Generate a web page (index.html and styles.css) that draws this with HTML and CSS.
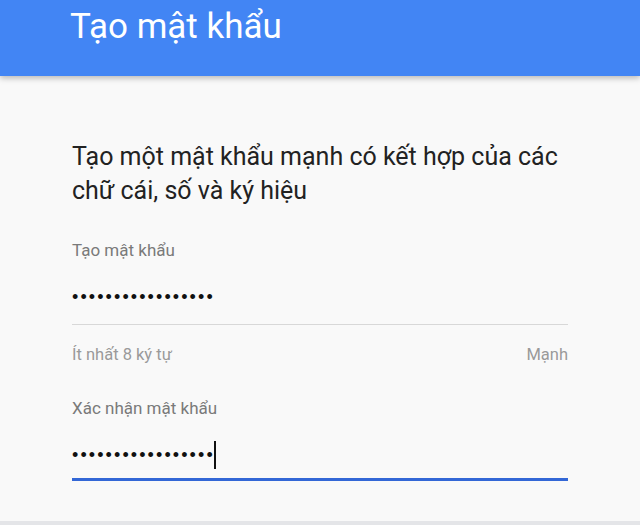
FILE: index.html
```html
<!DOCTYPE html>
<html lang="vi">
<head>
<meta charset="utf-8">
<link rel="stylesheet" href="styles.css">
</head>
<body>
<div class="page">
  <header class="appbar">
    <h1 class="title">Tạo mật khẩu</h1>
  </header>
  <main class="content">
    <p class="intro">Tạo một mật khẩu mạnh có kết hợp của các chữ cái, số và ký hiệu</p>
    <div class="field">
      <div class="label">Tạo mật khẩu</div>
      <div class="value">•••••••••••••••••</div>
      <div class="line"></div>
      <div class="helper"><span>Ít nhất 8 ký tự</span><span>Mạnh</span></div>
    </div>
    <div class="field field-2">
      <div class="label">Xác nhận mật khẩu</div>
      <div class="value value-2"><span>•••••••••••••••••</span><span class="cursor"></span></div>
      <div class="line line-active"></div>
    </div>
  </main>
  <div class="bottom"></div>
</div>
</body>
</html>
```
FILE: styles.css
```css
* { box-sizing: border-box; }
html, body { margin: 0; padding: 0; }
body {
  width: 640px;
  height: 525px;
  overflow: hidden;
  background: #f9f9f9;
  font-family: Roboto, "Noto Sans", sans-serif;
}
.page {
  height: 525px;
  display: flex;
  flex-direction: column;
}
.appbar {
  height: 76px;
  flex: none;
  background: #4285f4;
  box-shadow: 0 2px 6px rgba(0,0,0,0.28);
  position: relative;
  z-index: 1;
}
.title {
  margin: 0;
  padding: 5px 0 0 70px;
  font-weight: 400;
  font-size: 35px;
  line-height: 44px;
  color: #ffffff;
}
.content {
  flex: 1;
  padding: 64px 72px 0 72px;
}
.intro {
  margin: 0;
  font-size: 25px;
  line-height: 34px;
  color: #222222;
}
.field { margin-top: 30px; }
.label {
  font-size: 17px;
  line-height: 24px;
  color: #7a7a7a;
}
.value {
  margin-top: 21px;
  height: 28px;
  display: flex;
  align-items: center;
  font-family: "Liberation Sans", sans-serif;
  font-size: 18px;
  letter-spacing: 2.1px;
  color: #111;
}
.line {
  margin-top: 13px;
  height: 1px;
  background: #d8d8d8;
}
.helper {
  margin-top: 18px;
  display: flex;
  justify-content: space-between;
  font-size: 16.5px;
  line-height: 24px;
  color: #9a9a9a;
}
.field-2 { margin-top: 29px; }
.value-2 { margin-top: 21px; }
.cursor {
  display: inline-block;
  width: 2px;
  height: 28px;
  background: #111;
  margin-left: -1px;
}
.line-active {
  height: 3px;
  background: #3367d6;
  margin-top: 9px;
}
.bottom {
  height: 4px;
  flex: none;
  background: #e4e5e8;
}
```
